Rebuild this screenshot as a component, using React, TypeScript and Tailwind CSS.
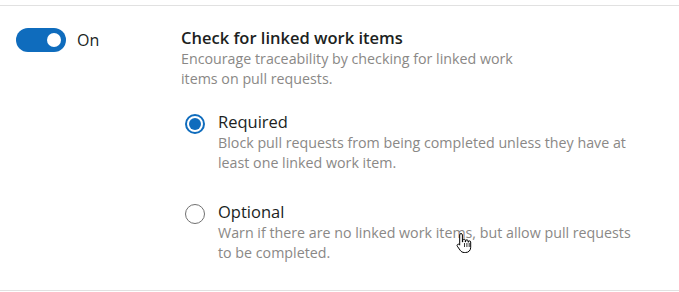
import React from "react";

function HandCursor() {
  return (
    <svg width="16" height="22" viewBox="0 0 16 22" className="absolute left-[456px] top-[232px]">
      <path
        d="M5 1.5c.8 0 1.4.6 1.4 1.4V10h.3V8.3c0-.8.6-1.3 1.3-1.3s1.3.5 1.3 1.3V10h.3V9c0-.7.6-1.2 1.3-1.2s1.2.5 1.2 1.2v1.2h.3V10c0-.7.5-1.1 1.1-1.1s1.2.4 1.2 1.1v5.3c0 3-2 5.2-5 5.2H8.3c-1.9 0-3.1-.8-4.2-2.3L1.3 14.2c-.4-.6-.3-1.4.3-1.8.6-.4 1.4-.3 1.8.3l.3.4V2.9c0-.8.6-1.4 1.3-1.4z"
        fill="#fff"
        stroke="#000"
        strokeWidth="1"
      />
      <path d="M8.5 11v4M10.9 11v4M13.2 11v4" stroke="#000" strokeWidth="0.8" />
    </svg>
  );
}

function Radio({ checked }: { checked: boolean }) {
  return checked ? (
    <span className="flex h-[20px] w-[20px] shrink-0 items-center justify-center rounded-full border-[2px] border-[#0f6cbd] bg-white">
      <span className="block h-[12px] w-[12px] rounded-full bg-[#0f6cbd]" />
    </span>
  ) : (
    <span className="block h-[20px] w-[20px] shrink-0 rounded-full border border-[#707070] bg-white" />
  );
}

function Option({ checked, label, desc }: { checked: boolean; label: string; desc: string }) {
  return (
    <div className="flex gap-[13px] pl-[4px]">
      <div className="pt-[3px]">
        <Radio checked={checked} />
      </div>
      <div>
        <div className="text-[16.5px] leading-[22px] text-[#201f1e]">{label}</div>
        <div className="max-w-[415px] text-[14.25px] leading-[20px] text-[#8a8886]">{desc}</div>
      </div>
    </div>
  );
}

export default function App() {
  return (
    <div className="relative h-[292px] w-[679px] bg-white font-['Open_Sans',sans-serif]">
      <div className="h-[5px]" />
      <div className="flex border-y border-[#e1e1e1] pb-[27px] pt-[21px]">
        <div className="flex w-[181px] items-start gap-[11px] pl-[16px] pt-[1px]">
          <span className="flex h-[24px] w-[50px] items-center justify-end rounded-full bg-[#0f6cbd] pr-[5px]">
            <span className="block h-[14px] w-[14px] rounded-full bg-white" />
          </span>
          <span className="text-[16px] leading-[24px] text-[#201f1e]">On</span>
        </div>
        <div className="flex flex-col">
          <div className="text-[16.5px] font-semibold leading-[22px] text-[#201f1e]">Check for linked work items</div>
          <div className="max-w-[340px] text-[14.25px] leading-[20px] text-[#8a8886]">
            Encourage traceability by checking for linked work items on pull requests.
          </div>
          <div className="flex flex-col gap-[28px] pt-[22px]">
            <Option
              checked
              label="Required"
              desc="Block pull requests from being completed unless they have at least one linked work item."
            />
            <Option
              checked={false}
              label="Optional"
              desc="Warn if there are no linked work items, but allow pull requests to be completed."
            />
          </div>
        </div>
      </div>
      <HandCursor />
    </div>
  );
}
